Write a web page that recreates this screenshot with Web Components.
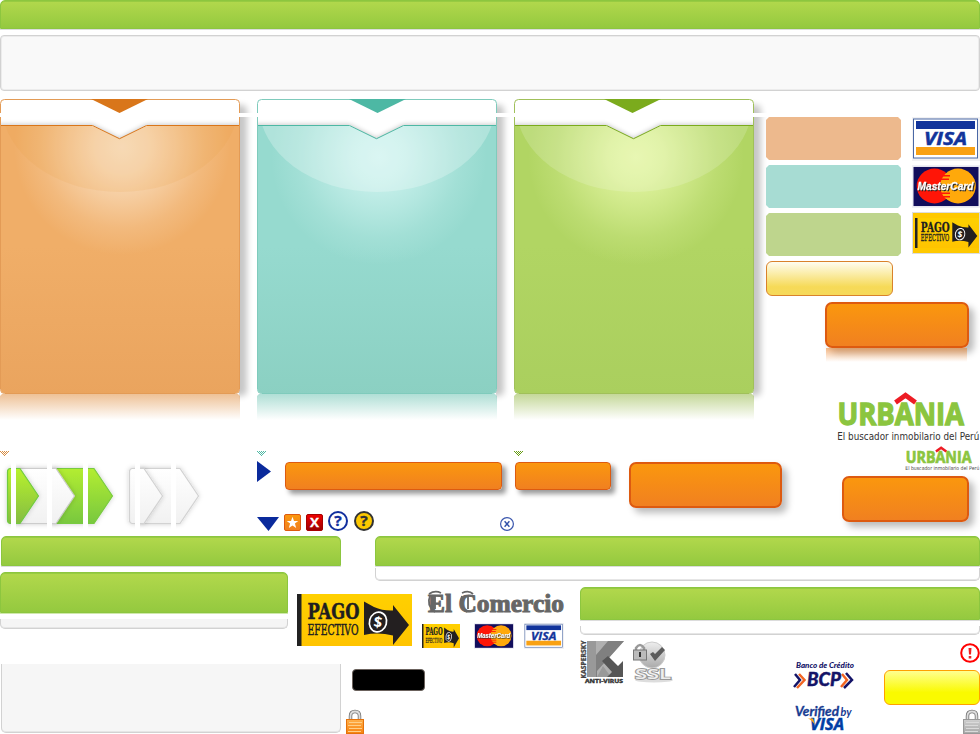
<!DOCTYPE html>
<html lang="es"><head><meta charset="utf-8"><title>Urbania UI elements</title>
<style>html,body{margin:0;background:#fff;font-family:"Open Sans",sans-serif}</style></head><body>
<sprite-board></sprite-board>
<script>
const define=(name,render)=>customElements.define(name,class extends HTMLElement{
  connectedCallback(){ if(!this.shadowRoot) this.attachShadow({mode:'open'}).innerHTML=render(this); }
});
const a=(e,n,d='')=>e.getAttribute(n)??d;

define('title-bar',e=>`<style>
:host{display:block;box-sizing:border-box;flex:none;height:${a(e,'h',30)}px;width:${a(e,'w')}px;border-bottom:1px solid ${a(e,'edge','#dcdcdc')}}
div{box-sizing:border-box;height:100%;border:1px solid #8cc63f;border-radius:5px 5px 0 0;background:linear-gradient(#b2d84c,#94c93f);box-shadow:inset 0 1px #97cb42}
</style><div></div>`);

define('soft-panel',e=>`<style>
:host{display:block;box-sizing:border-box;flex:none;height:${a(e,'h')}px;width:${a(e,'w')}px;border:1px solid #d2d2d2;background:${a(e,'bg','#f9f9f9')};border-radius:4px;box-shadow:inset 0 0 0 1px #ececec}
:host([foot]){border-top:0;border-radius:0 0 5px 5px;box-shadow:inset 0 -1px #e6e6e6}
</style>`);

define('cta-button',e=>`<style>
:host{display:block;box-sizing:border-box;flex:none;width:${a(e,'w')}px;height:${a(e,'h',46)}px;border:2px solid #dd5a10;border-radius:7px;background:linear-gradient(#fb980d,#f07f21);background-origin:border-box;box-shadow:5px 5px 7px #0004}
:host([small]){border-width:1px;border-radius:4px;box-shadow:4px 4px 5px #0006}
</style>`);

define('color-chip',e=>`<style>
:host{display:block;width:135px;height:43px;background:${a(e,'c')};clip-path:polygon(3px 0,132px 0,135px 3px,135px 40px,132px 43px,3px 43px,0 40px,0 3px)}
</style>`);

define('plain-button',e=>`<style>
:host{display:block;box-sizing:border-box;width:${a(e,'w')}px;height:${a(e,'h')}px;border:1px solid ${a(e,'edge')};border-radius:${a(e,'r',6)}px;background:${a(e,'fill')}}
</style>`);

define('promo-card',e=>{
 const [line,edge,mid,end,glow,gloss,shift,cy]=a(e,'palette').split('|');
 return `<style>:host{display:block;flex:none;width:257px;height:352px}svg{display:block;overflow:visible}</style>
<svg width="257" height="352" viewBox="0 98 257 352"><defs>
<linearGradient id="b" x1="0" y1="0" x2="0" y2="1"><stop stop-color="${mid}"/><stop offset=".45" stop-color="${mid}"/><stop offset="1" stop-color="${end}"/></linearGradient>
<radialGradient id="g" gradientUnits="userSpaceOnUse" cx="122" cy="${cy}" r="108"><stop stop-color="${glow}"/><stop offset=".25" stop-color="${glow}" stop-opacity=".84"/><stop offset=".5" stop-color="${glow}" stop-opacity=".54"/><stop offset=".75" stop-color="${glow}" stop-opacity=".22"/><stop offset="1" stop-color="${glow}" stop-opacity="0"/></radialGradient>
<linearGradient id="r" x1="0" y1="0" x2="0" y2="1"><stop stop-color="${edge}" stop-opacity=".62"/><stop offset="1" stop-color="${edge}" stop-opacity="0"/></linearGradient>
<filter id="s" x="-10%" y="-10%" width="125%" height="120%"><feGaussianBlur stdDeviation="3.4"/></filter>
<filter id="t" filterUnits="userSpaceOnUse" x="-20" y="100" width="290" height="60"><feGaussianBlur stdDeviation="2.800"/></filter>
<clipPath id="c"><path d="M1 126H92L119.500 139L147 126H239V390Q239 393 236 393H4Q1 393 1 390Z"/></clipPath>
<clipPath id="v"><path d="M1 117H239V125H147L119.500 139L92 125H1Z"/></clipPath>
<clipPath id="sh"><path d="M239 98H260V404H239Z"/></clipPath></defs>
<g clip-path="url(#sh)"><rect x="8" y="105" width="239" height="291" rx="5" fill="#000" opacity=".22" filter="url(#s)"/></g>
<path d="M2 394H238L240 396V420H0V396Z" fill="url(#r)"/>
<rect x=".5" y="99.500" width="239" height="294" rx="4" fill="#fff" stroke="${edge}"/>
<g clip-path="url(#c)"><rect y="125" width="240" height="270" fill="url(#b)"/><rect y="125" width="240" height="180" fill="url(#g)"/><ellipse cx="120" cy="105" rx="118" ry="87" fill="${gloss}"/></g>
<g clip-path="url(#v)"><path d="M-10 127H92L119.500 141L147 127H250" fill="none" stroke="#000" stroke-width="5" opacity=".24" filter="url(#t)"/></g>
<path d="M1 125.500H92.500L119.500 138.700L146.500 125.500H239" fill="none" stroke="${line}" stroke-width="1"/>
<path d="M${91+ +shift} 99H${148+ +shift}L${119.5+ +shift} 113Z" fill="${line}"/>
<path d="M0 113H257V117H0Z" fill="#fff"/></svg>`});

define('step-arrows',()=>`<style>:host{display:block;height:79px;margin-top:1px}svg{display:block;overflow:visible}</style>
<svg width="210" height="76" viewBox="0 457 210 76"><defs>
<linearGradient id="g" x1="0" y1="0" x2="0" y2="1"><stop stop-color="#b8f22d"/><stop offset="1" stop-color="#84bc42"/></linearGradient>
<linearGradient id="h" x1="0" y1="0" x2="0" y2="1"><stop stop-color="#b3ed31"/><stop offset="1" stop-color="#78c83f"/></linearGradient>
<linearGradient id="w" x1="0" y1="0" x2="0" y2="1"><stop stop-color="#fff"/><stop offset="1" stop-color="#f1f1f1"/></linearGradient>
<filter id="s" x="-20%" y="-20%" width="150%" height="150%"><feDropShadow dx="0" dy="0" stdDeviation="2.800" flood-color="#000" flood-opacity=".2"/></filter></defs>
<g stroke-width="1.200" stroke-linejoin="round">
<path filter="url(#s)" d="M52 468.500H94L112.500 496L94 523.500H52Z" fill="url(#h)" stroke="#78cb3f"/>
<path filter="url(#s)" d="M16 468.500H56L74.500 496L56 523.500H16Z" fill="url(#w)" stroke="#ccc"/>
<path filter="url(#s)" d="M10.500 468.500H20L38.500 496L20 523.500H10.500Q7.500 523.500 7.500 520V472Q7.500 468.500 10.500 468.500Z" fill="url(#g)" stroke="#70cb40"/>
<path filter="url(#s)" d="M140 468.500H180L198.500 496L180 523.500H140Z" fill="url(#w)" stroke="#d2d2d2"/>
<path filter="url(#s)" d="M132.500 468.500H144L162.500 496L144 523.500H132.500Q129.500 523.500 129.500 520V472Q129.500 468.500 132.500 468.500Z" fill="url(#w)" stroke="#d2d2d2"/></g>
<path d="M11 457h5v76h-5zM47 457h5v76h-5zM83 457h5v76h-5zM135 457h5v76h-5zM171 457h5v76h-5z" fill="#fff"/></svg>`);

define('dot-tick',e=>`<style>:host{display:block;height:5px;margin-top:1px}svg{display:block}</style>
<svg width="9" height="5" shape-rendering="crispEdges"><path fill="${a(e,'c')}" d="M0 0h1v1H0zM2 0h1v1H2zM4 0h1v1H4zM6 0h1v1H6zM8 0h1v1H8zM1 1h1v1H1zM3 1h1v1H3zM5 1h1v1H5zM7 1h1v1H7zM2 2h1v1H2zM4 2h1v1H4zM6 2h1v1H6zM3 3h1v1H3zM5 3h1v1H5zM4 4h1v1H4z"/></svg>`);

const grad=(id,c1,c2)=>`<linearGradient id="${id}" x1="0" y1="0" x2="0" y2="1"><stop stop-color="${c1}"/><stop offset="1" stop-color="${c2}"/></linearGradient>`;
const T=(x,y,s,w,txt,extra='')=>`<text x="${x}" y="${y}" font-size="${s}" textLength="${w}" lengthAdjust="spacingAndGlyphs" ${extra}>${txt}</text>`;
const SANS='font-family="Open Sans" font-weight="700"';
const lock=(body,c1,c2,edge)=>`<path d="M4.500 11V6Q4.500 1.500 9 1.500T13.500 6V11" fill="none" stroke="#777" stroke-width="3.500"/><path d="M4.500 11V6Q4.500 1.500 9 1.500T13.500 6V11" fill="none" stroke="#ddd" stroke-width="1.800"/><defs>${grad('l',c1,c2)}</defs><rect x=".5" y="9.500" width="17" height="14" fill="url(#l)" stroke="${edge}"/><path d="M3 12.500H16M2 15.500H15M3 18.500H16M2 21.500H15" stroke="${body}" stroke-width="1"/>`;
const urbania=`${T(.5,32.800,30.500,126.5,'URBANIA','font-family="Open Sans" font-weight="700" fill="#8bc53f" stroke="#8bc53f" stroke-width="1.300"')}<path d="M58.500 10.500L68.500 3.300L78.500 10.500" fill="none" stroke="#ed1c24" stroke-width="4.800"/>`;
const art={
 right:[14,21,'<path d="M0 0L14 10.500L0 21Z" fill="#0a2a9c"/>'],
 down:[22,14,'<path d="M0 0H22L11.500 14Z" fill="#0a2a9c"/>'],
 star:[17,17,`<defs>${grad('o','#fb980d','#f07f21')}</defs><rect x=".5" y=".5" width="16" height="16" rx="1.500" fill="url(#o)" stroke="#dd5a10"/><path d="M8.500 2.700L10 7H14.300L10.900 9.600L12.200 14L8.500 11.400L4.800 14L6.100 9.600L2.700 7H7Z" fill="#fff"/>`],
 cross:[17,17,`<defs>${grad('o','#f00000','#990000')}</defs><rect x=".5" y=".5" width="16" height="16" rx="1.500" fill="url(#o)" stroke="#a60000"/>`+T(4,13,13,9,'X',SANS+' fill="#fff" stroke="#fff" stroke-width=".3"')],
 helpblue:[20,20,'<circle cx="10" cy="10" r="9" fill="#fff" stroke="#122f9e" stroke-width="2"/>'+T(6.3,15,14,7.5,'?',SANS+' fill="#122f9e" stroke="#122f9e" stroke-width=".3"')],
 helpgold:[20,20,'<circle cx="10" cy="10" r="9" fill="#fdc800" stroke="#333" stroke-width="2"/>'+T(6.3,15,14,7.5,'?',SANS+' fill="#333" stroke="#333" stroke-width=".3"')],
 close:[14,14,'<circle cx="7" cy="7" r="6.400" fill="#fff" stroke="#3b57ad" stroke-width="1.200"/><path d="M4.600 4.200L9.400 9.800M9.400 4.200L4.600 9.800" stroke="#3050a8" stroke-width="1.400"/>'],
 alert:[20,20,'<circle cx="10" cy="10" r="8.800" fill="#fff" stroke="#f00" stroke-width="2"/><path d="M8.500 5H11.500L11 11.500H9ZM8.700 13H11.300V15.500H8.700Z" fill="#f02020"/>'],
 lockgold:[18,24,lock('#ffcf88','#ffb04b','#f7820f','#e4720b')],
 lockgray:[18,24,lock('#dadada','#cfcfcf','#a8a8a8','#999')],
 visa:[68,44,`<rect width="68" height="44" fill="#f1f1f3"/><rect x="1.500" y="2" width="64" height="39" fill="#fff" stroke="#4a68a5"/><rect x="4" y="4" width="59" height="8" fill="#12349b"/><rect x="4" y="30" width="59" height="8" fill="#f9a113"/>`+T(12,28,18,43,'VISA',SANS+' font-style="italic" fill="#12349b" stroke="#12349b" stroke-width=".5"')],
 mastercard:[68,44,`<rect width="68" height="44" fill="#f0f0f6"/><rect x="1.500" y="2" width="65" height="40" fill="#120e5c"/><circle cx="22.500" cy="21.500" r="17.800" fill="#ff1507"/><circle cx="46" cy="21.500" r="17.800" fill="#ffa90b"/><path d="M31 11H38M29 14.500H37M28 29H38M30 32.500H38" stroke="#ff1507" stroke-width="1.500"/>`+T(5.5,26,12,56,'MasterCard','font-family="Liberation Sans" font-weight="700" font-style="italic" fill="#fff" stroke="#fff" stroke-width=".3" style="filter:drop-shadow(1px 1px .5px #222)"')],
 pago:[115,52,`<defs>${grad('y','#ffd000','#ffc400')}</defs><rect width="115" height="52" fill="url(#y)"/><rect width="4.500" height="52" fill="#222"/>`+T(10.5,24.500,23,52,'PAGO','font-family="DejaVu Serif" font-weight="700" fill="#201d20" stroke="#201d20" stroke-width=".5"')+T(10.5,40.500,15,51,'EFECTIVO','font-family="DejaVu Serif" fill="#201d20" stroke="#201d20" stroke-width=".5"')+'<path d="M67 7.500L77 13Q86 17 96 16.500V11L112 31L96 51V41.500Q81 38 67 41Z" fill="#231f20"/><ellipse cx="81" cy="28" rx="8.500" ry="10" fill="#231f20" stroke="#fff" stroke-width="1.700" transform="rotate(15 81 28)"/>'+T(76.7,33.5,15,8.5,'$',SANS+' fill="#fff" transform="rotate(8 81 28)"')],
 comercio:[138,26,T(1,20.500,26,136,'El Comercio','font-family="Liberation Serif" font-weight="700" fill="#666" stroke="#666" stroke-width="1"')+'<path d="M3 5Q-1 14 8 21M35 5Q31 14 40 21M2 3Q8 -1 14 2M35 2Q42 -1 46 3M8 4V18M41 5V18" fill="none" stroke="#666" stroke-width="1.800"/>'],
 kaspersky:[44,44,`<g transform="translate(5.500 38.500) rotate(-90)">${T(0,0,7.5,38,'KASPERSKY',SANS+' fill="#444" stroke="#444" stroke-width=".3"')}</g><path d="M7 1H44L28 19L40 37H7Z" fill="#b0b0b0"/><path d="M7 1H16V15L28 1H44L17 31V37H7Z" fill="#808080"/><path d="M7 1H16V37H7ZM17 37L23 26L31 37Z" fill="#999"/><path d="M22 21L28 16L38 26L43 21V37H27L32 32Z" fill="#565656"/>`+T(5,43,5.8,38,'ANTI-VIRUS',SANS+' fill="#333" stroke="#333" stroke-width=".4"')],
 ssl:[40,42,`<defs>${grad('s','#eee','#aaa')}</defs><circle cx="19" cy="14" r="13" fill="url(#s)" stroke="#ccc"/><path d="M17 13L22 20L32 9L29 6L22 13L20 11Z" fill="#5c5c5c"/><path d="M3 10V7Q7 1 11 7V10" fill="none" stroke="#999" stroke-width="2.500"/><rect x=".5" y="9" width="13" height="10" fill="#bbb" stroke="#777"/><path d="M7 11V16" stroke="#333" stroke-width="2"/><ellipse cx="21" cy="39" rx="19" ry="2.500" fill="#ddd"/>`+T(2,37.500,14.5,36,'SSL','font-family="Open Sans" font-weight="600" fill="#eee" stroke="#999" stroke-width="1.800" paint-order="stroke"')],
 bcp:[62,30,T(3,7.5,8.2,58,'Banco de Crédito','font-family="Lato" font-style="italic" font-weight="900" fill="#141468"')+'<path d="M2 14L7 20L1 27" fill="none" stroke="#141468" stroke-width="2.500"/><path d="M6 14L11.500 20L4 28" fill="none" stroke="#f26522" stroke-width="2.500"/>'+T(14,26,18,34,'BCP','font-family="Lato" font-style="italic" font-weight="900" fill="#141468" stroke="#141468" stroke-width=".4"')+'<path d="M49 14L54 20L48 27" fill="none" stroke="#f26522" stroke-width="2.500"/><path d="M53 13L59 20L51 28" fill="none" stroke="#141468" stroke-width="2.500"/>'],
 verified:[58,27,T(0,11,12.5,44,'Verified','font-family="Lato" font-style="italic" font-weight="700" fill="#173b91" stroke="#173b91" stroke-width=".3"')+T(45.5,11,11,11,'by','font-family="Lato" font-style="italic" font-weight="700" fill="#173b91"')+T(15,24.500,15.5,34,'VISA','font-family="Open Sans" font-style="italic" font-weight="700" fill="#003da5" stroke="#003da5" stroke-width=".5"')+'<path d="M13 13.500H18L20 20Q17 15 13 13.500Z" fill="#f7a51c"/>'],
 urbania:[143,50,urbania+T(.3,48,10,142,'El buscador inmobilario del Perú','font-family="DejaVu Sans" fill="#333"')],
 urbaniasmall:[75,26,`<g transform="translate(.5 0) scale(.52)">${urbania}</g>`+T(.3,24.300,5.300,74,'El buscador inmobilario del Perú','font-family="DejaVu Sans" fill="#444"')]
};
define('art-icon',e=>{const [w,h,body]=art[a(e,'name')];const W=a(e,'w',w),H=a(e,'h',h);
 return `<style>:host{display:block;flex:none;width:${W}px;height:${H}px}svg{display:block;overflow:visible}</style><svg width="${W}" height="${H}" viewBox="0 0 ${w} ${h}" preserveAspectRatio="none">${body}</svg>`});

define('sprite-board',()=>`<style>
:host{display:block;width:980px;height:734px;overflow:hidden}
.row{display:flex;align-items:flex-start}.col{display:flex;flex-direction:column;align-items:flex-start}
.main{height:438px;margin-top:7px}.left{width:766px;flex:none}.aside{width:214px;flex:none;padding-top:19px;box-sizing:border-box}
.chips{gap:5px;width:146px}.end{align-self:flex-end}
.refl{width:141px;height:14px;margin:0 0 0 60px;background:linear-gradient(#f07f2188,#f07f2100)}
.pago{box-sizing:border-box;width:68px;height:42px;padding:5px 2px 4px;background:#ffc900;border:1px solid #ddd}
.c1{width:257px;flex:none}.c2{width:258px;flex:none}.tools{width:257px;align-items:center;height:20px}
</style>
<title-bar w="980"></title-bar>
<soft-panel w="980" h="56" style="margin-top:5px"></soft-panel>
<div class="row main">
 <div class="col left">
  <div class="row">
   <promo-card palette="#d9761a|#e39b56|#f0ae68|#eaa45e|#fae3c8|#e89a3d22|0|147"></promo-card>
   <promo-card palette="#4db8a4|#7fcbbc|#96dacf|#8bd0c2|#cef3ef|#ffffff40|1|157"></promo-card>
   <promo-card palette="#7bab1d|#a0c05a|#b1d563|#aacf5e|#e4f6a4|#ffffff2a|-1|157"></promo-card>
  </div>
  <div class="row">
   <div class="col c1"><dot-tick c="#d98d42"></dot-tick><step-arrows></step-arrows></div>
   <div class="col c2"><dot-tick c="#4db8a4"></dot-tick>
    <div class="row" style="margin-top:5px;height:50px"><art-icon name="right"></art-icon><cta-button small w="217" h="28" style="margin:1px 0 0 14px"></cta-button></div>
    <div class="row tools"><art-icon name="down" style="margin-top:6px"></art-icon><art-icon name="star" style="margin:3px 0 0 5px"></art-icon><art-icon name="cross" style="margin:3px 0 0 5px"></art-icon><art-icon name="helpblue" style="margin-left:5px"></art-icon><art-icon name="helpgold" style="margin-left:6px"></art-icon><art-icon name="close" style="margin:6px 0 0 auto"></art-icon></div>
   </div>
   <div class="col" style="width:114px;margin-left:-1px"><dot-tick c="#689d14"></dot-tick><cta-button small w="96" h="28" style="margin:6px 0 0 1px"></cta-button></div>
   <cta-button w="153" style="margin:12px 0 0 1px"></cta-button>
  </div>
 </div>
 <div class="col aside">
  <div class="row">
   <div class="col chips"><color-chip c="#edb98d"></color-chip><color-chip c="#a7dcd3"></color-chip><color-chip c="#bed58d"></color-chip></div>
   <div class="col" style="gap:4px"><art-icon name="visa"></art-icon><art-icon name="mastercard" h="43"></art-icon><div class="pago"><art-icon name="pago" w="64" h="30"></art-icon></div></div>
  </div>
  <plain-button w="127" h="35" edge="#d9822b" fill="linear-gradient(#fffdf0,#f6da58 75%,#f6d95a)" style="margin-top:5px"></plain-button>
  <cta-button w="144" style="margin:6px 0 0 59px"></cta-button><div class="refl"></div>
  <art-icon class="end" name="urbania" style="margin-top:30px"></art-icon>
  <art-icon class="end" name="urbaniasmall" style="margin-top:4px"></art-icon>
  <cta-button w="127" style="margin:4px 0 0 76px"></cta-button>
 </div>
</div>
<div class="row">
 <div class="col" style="width:297px;flex:none">
  <title-bar w="340" h="31" style="margin-left:1px"></title-bar>
  <title-bar w="288" h="42" edge="#d0e8ab" style="margin-top:5px"></title-bar>
  <soft-panel foot bg="#f5f5f5" w="288" h="10" style="margin-top:5px"></soft-panel>
  <soft-panel foot w="340" h="69" bg="#f6f6f6" style="margin:35px 0 0 1px"></soft-panel>
 </div>
 <div class="col">
  <title-bar w="605" h="31" style="margin-left:78px"></title-bar>
  <soft-panel foot bg="#fff" w="605" h="14" style="margin:0 0 0 78px;clip-path:inset(1px 0 0 0)"></soft-panel>
  <div class="row" style="margin-top:6px">
   <div class="col" style="width:283px">
    <div class="row" style="margin-top:7px"><art-icon name="pago"></art-icon>
     <div class="col" style="margin-left:10px"><art-icon name="comercio" style="margin:-3px 0 0 5px"></art-icon>
      <div class="row" style="margin-top:7px"><art-icon name="pago" w="38" h="24"></art-icon><art-icon name="mastercard" w="40" h="26" style="margin:-1px 0 0 14px"></art-icon><art-icon name="visa" w="40" h="26" style="margin:-1px 0 0 10px"></art-icon></div></div></div>
    <plain-button w="73" h="22" r="4" edge="#6b625d" fill="#000" style="margin:20px 0 0 55px"></plain-button>
    <art-icon name="lockgold" style="margin:19px 0 0 49px"></art-icon>
   </div>
   <div class="col" style="width:400px">
    <title-bar w="400" h="34"></title-bar>
    <soft-panel foot bg="#fff" w="400" h="9" style="margin-top:5px"></soft-panel>
    <div class="row" style="margin-top:5px;width:400px">
     <art-icon name="kaspersky"></art-icon><art-icon name="ssl" style="margin:1px 0 0 9px"></art-icon>
     <div class="col" style="margin:20px 0 0 120px"><art-icon name="bcp"></art-icon><art-icon name="verified" style="margin:15px 0 0 2px"></art-icon></div>
     <div class="col" style="margin:3px 0 0 29px;width:96px"><art-icon class="end" name="alert"></art-icon><plain-button w="96" h="35" edge="#ffa000" fill="linear-gradient(#ffff91,#fafa00 65%)" style="margin-top:7px"></plain-button><art-icon class="end" name="lockgray" style="margin:5px -1px 0 0"></art-icon></div>
    </div>
   </div>
  </div>
 </div>
</div>`);
</script></body></html>
